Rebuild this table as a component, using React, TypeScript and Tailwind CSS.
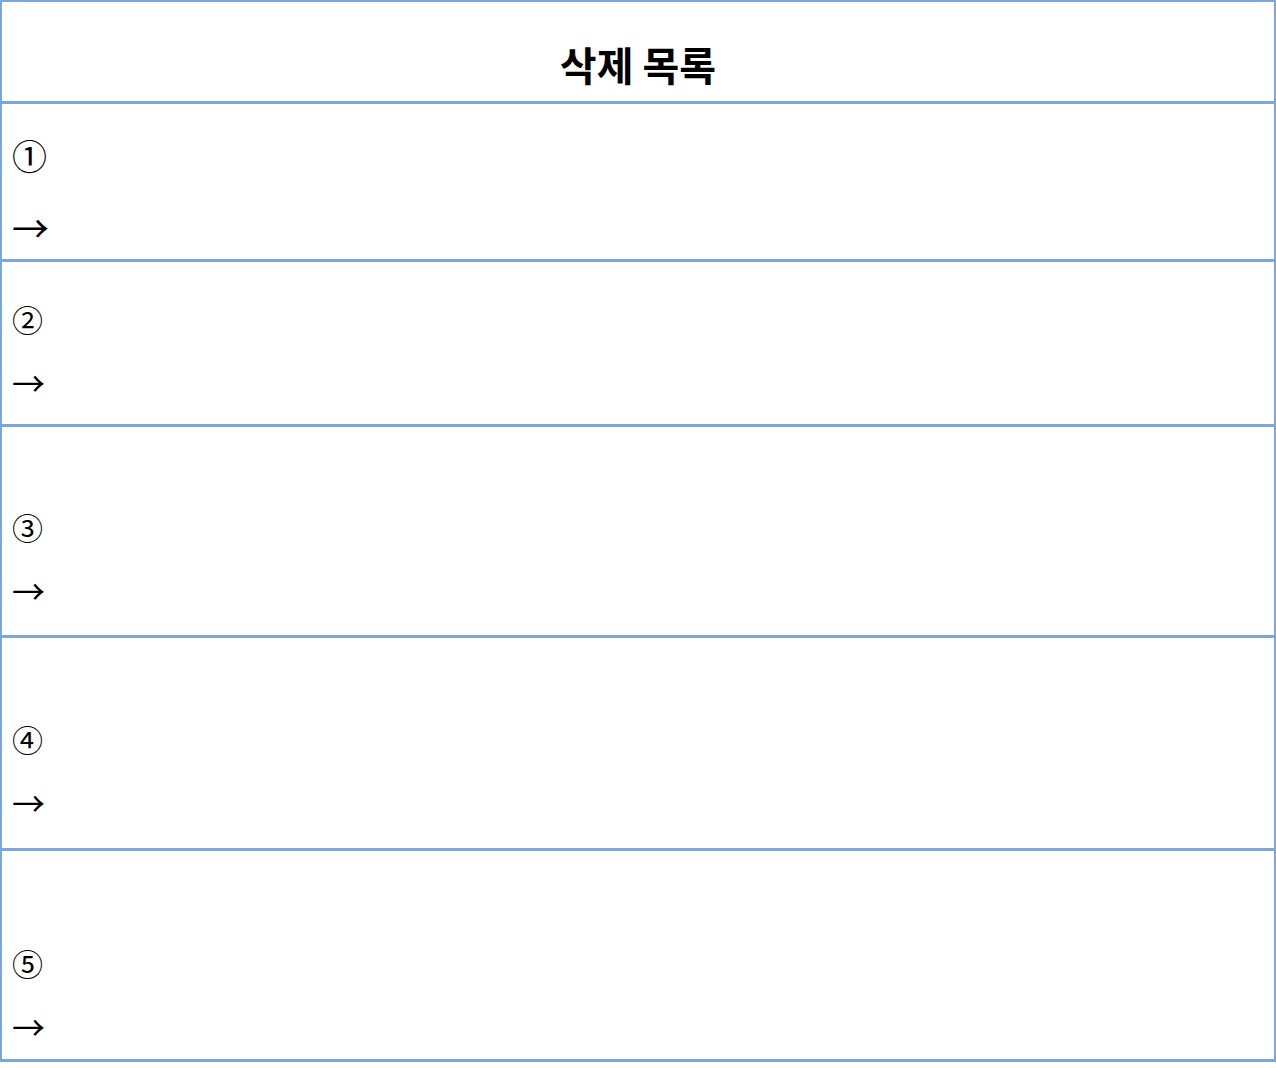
import React from 'react';

interface Row {
  mark: string;
  height: string;
  padTop: string;
  lineHeight: string;
  size: string;
  arrow: string;
}

const rows: Row[] = [
  { mark: '①', height: 'h-[158px]', padTop: 'pt-[20px]', lineHeight: 'leading-[69px]', size: 'text-[35px]', arrow: 'text-[37px]' },
  { mark: '②', height: 'h-[165px]', padTop: 'pt-[29px]', lineHeight: 'leading-[61px]', size: 'text-[31px]', arrow: 'text-[33px]' },
  { mark: '③', height: 'h-[211px]', padTop: 'pt-[72px]', lineHeight: 'leading-[61px]', size: 'text-[31px]', arrow: 'text-[33px]' },
  { mark: '④', height: 'h-[213px]', padTop: 'pt-[73px]', lineHeight: 'leading-[61px]', size: 'text-[31px]', arrow: 'text-[33px]' },
  { mark: '⑤', height: 'h-[211px]', padTop: 'pt-[84px]', lineHeight: 'leading-[61px]', size: 'text-[31px]', arrow: 'text-[33px]' },
];

const App: React.FC = () => {
  return (
    <div className="min-h-screen bg-white">
      <div className="w-[1276px] border-x-2 border-t-2 border-[#7ba6d8]">
        {/* 제목 */}
        <div
          className="h-[102px] flex items-center justify-center pt-[24px] border-b-[3px] border-[#7ba6d8] text-[40px] font-bold text-black"
          style={{ fontFamily: "'Noto Sans CJK KR', 'Noto Sans', sans-serif" }}
        >
          삭제 목록
        </div>

        {/* 항목 */}
        {rows.map((row) => (
          <div
            key={row.mark}
            className={`${row.height} ${row.padTop} border-b-[3px] border-[#7ba6d8] pl-[10px] text-black`}
          >
            <div
              className={`${row.lineHeight} ${row.size}`}
              style={{ fontFamily: "'DejaVu Serif', 'Liberation Serif', 'Noto Sans CJK KR', serif" }}
            >
              {row.mark}
            </div>
            <div
              className={`${row.lineHeight} ${row.arrow}`}
              style={{ fontFamily: "'Noto Sans CJK KR', serif" }}
            >
              →
            </div>
          </div>
        ))}
      </div>
    </div>
  );
};

export default App;
